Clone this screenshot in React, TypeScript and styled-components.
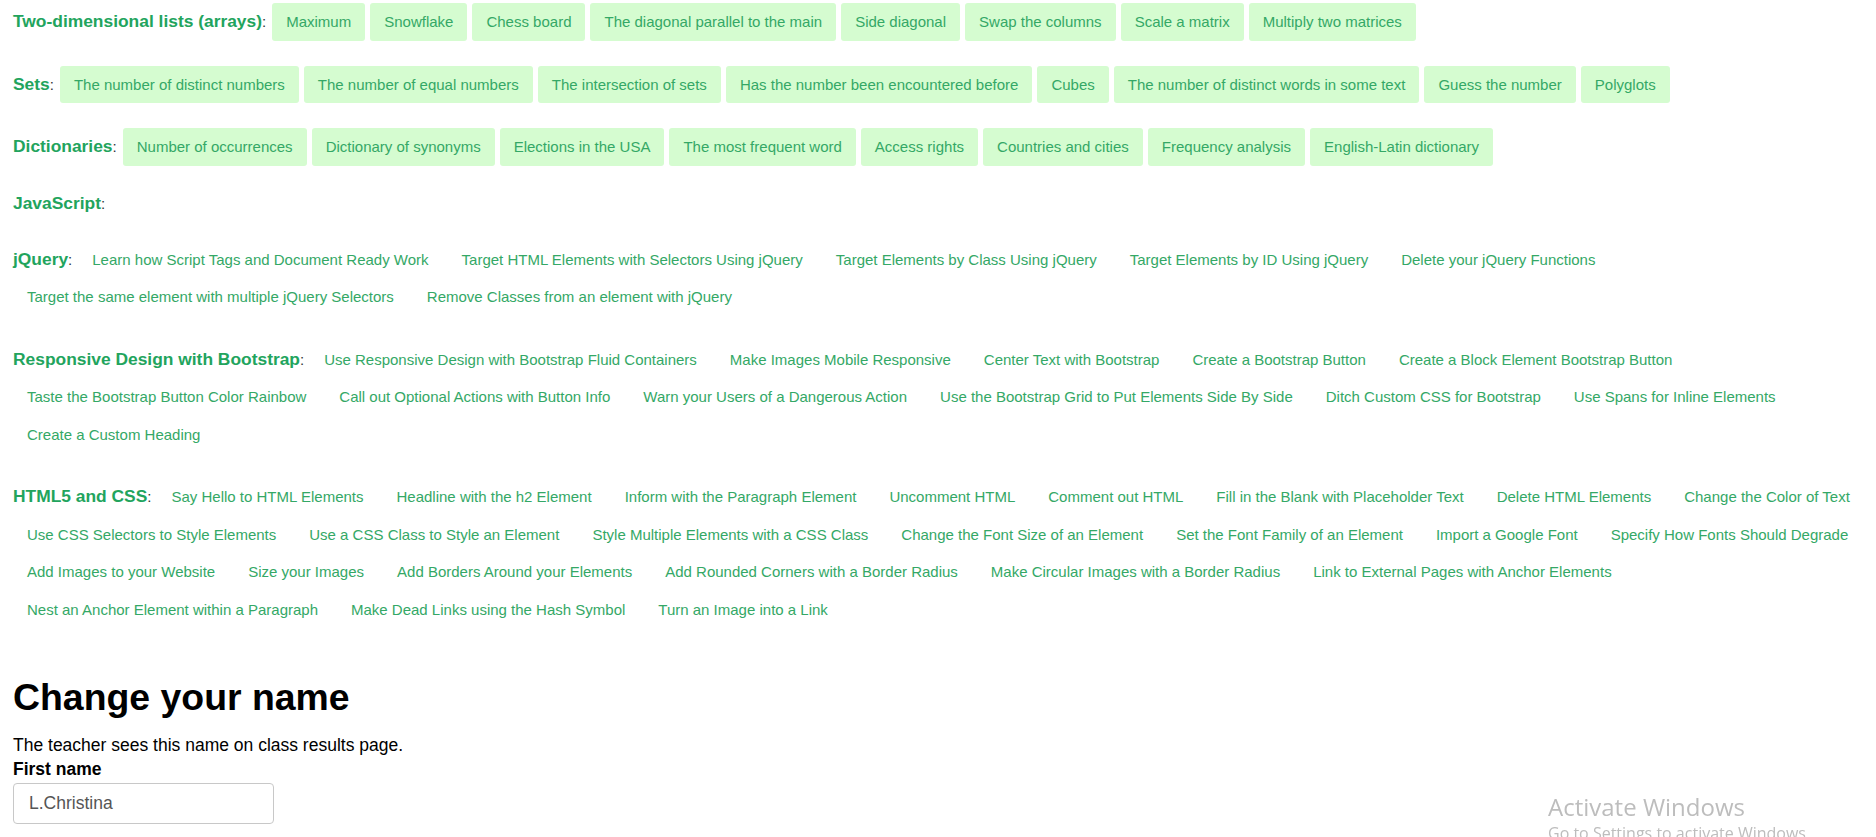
import React from 'react'
import styled, { createGlobalStyle } from 'styled-components'

const GlobalStyle = createGlobalStyle`
  html,
  body {
    margin: 0;
    padding: 0;
    background: #ffffff;
    font-family: 'Liberation Sans', Arial, sans-serif;
    color: #000000;
  }
`

interface Topic {
  title: string
  boxed: boolean
  items: string[]
}

const topics: Topic[] = [
  {
    title: 'Two-dimensional lists (arrays)',
    boxed: true,
    items: [
      'Maximum',
      'Snowflake',
      'Chess board',
      'The diagonal parallel to the main',
      'Side diagonal',
      'Swap the columns',
      'Scale a matrix',
      'Multiply two matrices',
    ],
  },
  {
    title: 'Sets',
    boxed: true,
    items: [
      'The number of distinct numbers',
      'The number of equal numbers',
      'The intersection of sets',
      'Has the number been encountered before',
      'Cubes',
      'The number of distinct words in some text',
      'Guess the number',
      'Polyglots',
    ],
  },
  {
    title: 'Dictionaries',
    boxed: true,
    items: [
      'Number of occurrences',
      'Dictionary of synonyms',
      'Elections in the USA',
      'The most frequent word',
      'Access rights',
      'Countries and cities',
      'Frequency analysis',
      'English-Latin dictionary',
    ],
  },
  { title: 'JavaScript', boxed: false, items: [] },
  {
    title: 'jQuery',
    boxed: false,
    items: [
      'Learn how Script Tags and Document Ready Work',
      'Target HTML Elements with Selectors Using jQuery',
      'Target Elements by Class Using jQuery',
      'Target Elements by ID Using jQuery',
      'Delete your jQuery Functions',
      'Target the same element with multiple jQuery Selectors',
      'Remove Classes from an element with jQuery',
    ],
  },
  {
    title: 'Responsive Design with Bootstrap',
    boxed: false,
    items: [
      'Use Responsive Design with Bootstrap Fluid Containers',
      'Make Images Mobile Responsive',
      'Center Text with Bootstrap',
      'Create a Bootstrap Button',
      'Create a Block Element Bootstrap Button',
      'Taste the Bootstrap Button Color Rainbow',
      'Call out Optional Actions with Button Info',
      'Warn your Users of a Dangerous Action',
      'Use the Bootstrap Grid to Put Elements Side By Side',
      'Ditch Custom CSS for Bootstrap',
      'Use Spans for Inline Elements',
      'Create a Custom Heading',
    ],
  },
  {
    title: 'HTML5 and CSS',
    boxed: false,
    items: [
      'Say Hello to HTML Elements',
      'Headline with the h2 Element',
      'Inform with the Paragraph Element',
      'Uncomment HTML',
      'Comment out HTML',
      'Fill in the Blank with Placeholder Text',
      'Delete HTML Elements',
      'Change the Color of Text',
      'Use CSS Selectors to Style Elements',
      'Use a CSS Class to Style an Element',
      'Style Multiple Elements with a CSS Class',
      'Change the Font Size of an Element',
      'Set the Font Family of an Element',
      'Import a Google Font',
      'Specify How Fonts Should Degrade',
      'Add Images to your Website',
      'Size your Images',
      'Add Borders Around your Elements',
      'Add Rounded Corners with a Border Radius',
      'Make Circular Images with a Border Radius',
      'Link to External Pages with Anchor Elements',
      'Nest an Anchor Element within a Paragraph',
      'Make Dead Links using the Hash Symbol',
      'Turn an Image into a Link',
    ],
  },
]

export default function App() {
  return (
    <Page>
      <GlobalStyle />
      <TopicList>
        {topics.map((topic) => (
          <TopicRow key={topic.title}>
            <TopicLabel>
              <TopicTitle>{topic.title}</TopicTitle>:
            </TopicLabel>
            {topic.items.map((item) => (
              <Problem key={item} href="#" $boxed={topic.boxed}>
                {item}
              </Problem>
            ))}
          </TopicRow>
        ))}
      </TopicList>

      <NameForm>
        <Title>Change your name</Title>
        <Hint>The teacher sees this name on class results page.</Hint>
        <FieldLabel htmlFor="first-name">First name</FieldLabel>
        <NameInput id="first-name" defaultValue="L.Christina" />
      </NameForm>

      <Watermark>
        <WatermarkTitle>Activate Windows</WatermarkTitle>
        <WatermarkText>Go to Settings to activate Windows.</WatermarkText>
      </Watermark>
    </Page>
  )
}

const Page = styled.div`
  padding: 3px 3px 0 13px;
`

const TopicList = styled.div`
  display: flex;
  flex-direction: column;
  gap: 25px;
`

const TopicRow = styled.div`
  display: flex;
  flex-wrap: wrap;
  align-items: baseline;
  column-gap: 5px;
`

const TopicLabel = styled.span`
  font-size: 15px;
  line-height: 25px;
  color: #333333;
  margin-right: 1px;
`

const TopicTitle = styled.b`
  font-size: 17.4px;
  font-weight: bold;
  color: #22a45d;
`

const Problem = styled.a<{ $boxed: boolean }>`
  display: inline-block;
  padding: 10px 14px;
  font-size: 15px;
  line-height: 17.5px;
  color: #34a866;
  text-decoration: none;
  white-space: nowrap;
  border-radius: 3px;
  background: ${(p) => (p.$boxed ? '#d5fcd0' : 'transparent')};
`

const NameForm = styled.form`
  padding-top: 48px;
  font-size: 17.5px;
`

const Title = styled.h1`
  margin: 0 0 16px;
  font-size: 37.4px;
  font-weight: bold;
`

const Hint = styled.p`
  margin: 0 0 3px;
  font-size: 17.5px;
`

const FieldLabel = styled.label`
  display: block;
  font-size: 17.5px;
  font-weight: bold;
  margin-bottom: 3px;
`

const NameInput = styled.input`
  box-sizing: border-box;
  width: 261px;
  height: 41px;
  padding: 0 15px;
  border: 1px solid #c8c8c8;
  border-radius: 4px;
  font-family: 'Liberation Sans', Arial, sans-serif;
  font-size: 17.5px;
  color: #555555;
  outline: none;
`

const Watermark = styled.div`
  position: fixed;
  left: 1548px;
  top: 793px;
  color: #bdbdbd;
  font-family: 'Open Sans', 'Noto Sans', sans-serif;
  pointer-events: none;
`

const WatermarkTitle = styled.div`
  font-size: 24px;
  line-height: 28px;
`

const WatermarkText = styled.div`
  margin-top: 2px;
  font-size: 16px;
  line-height: 20px;
`
